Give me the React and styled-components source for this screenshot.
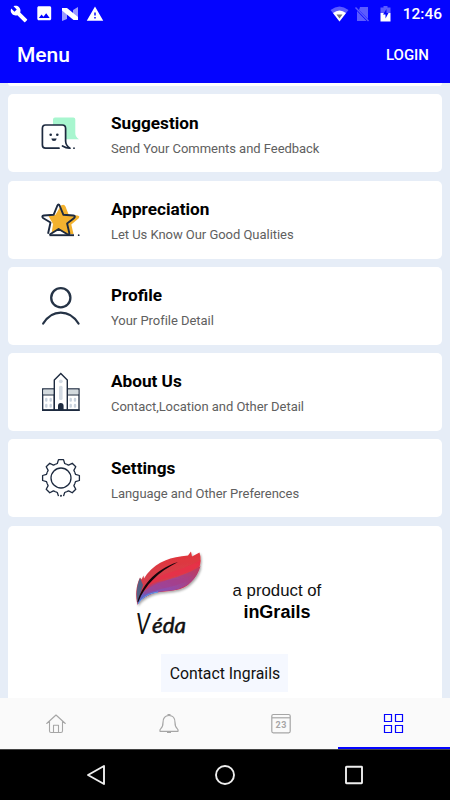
import React from "react"
import styled, { createGlobalStyle } from "styled-components"
import { MdBuild, MdImage, MdWarning } from "react-icons/md"

const GlobalStyle = createGlobalStyle`
  * {
    box-sizing: border-box;
  }
  body {
    margin: 0;
    font-family: Roboto, sans-serif;
  }
  h1, h2, p {
    margin: 0;
  }
  svg {
    display: block;
    flex-shrink: 0;
  }
  button {
    border: 0;
    padding: 0;
    background: none;
    font-family: inherit;
  }
`

const Screen = styled.div`
  width: 450px;
  height: 800px;
  display: flex;
  flex-direction: column;
  overflow: hidden;
  background: #e6edf7;
`

const Header = styled.header`
  height: 83px;
  flex-shrink: 0;
  background: #0404ff;
  color: #fff;
`

const StatusBar = styled.div`
  height: 27px;
  padding: 0 8px 0 10px;
  display: flex;
  justify-content: space-between;
  align-items: center;
`

const StatusGroup = styled.div`
  display: flex;
  align-items: center;
  gap: ${props => props.$gap}px;
`

const Clock = styled.span`
  font-size: 15.5px;
  font-weight: 500;
  line-height: 27px;
  padding-top: 1px;
  margin-left: 2px;
`

const TitleBar = styled.div`
  height: 56px;
  padding: 0 21px 0 17px;
  display: flex;
  justify-content: space-between;
  align-items: center;
`

const Title = styled.h1`
  font-size: 21px;
  font-weight: 500;
  line-height: 24px;
`

const LoginButton = styled.button`
  color: #fff;
  font-size: 15px;
  font-weight: 500;
`

const List = styled.main`
  flex: 1;
  min-height: 0;
  overflow: hidden;
  padding: 0 8.5px 0 8.3px;
  display: flex;
  flex-direction: column;
  gap: 8.25px;
`

const CardEnd = styled.div`
  height: 3.2px;
  flex-shrink: 0;
  background: #fff;
  border-radius: 0 0 5px 5px;
`

const Card = styled.div`
  height: 78px;
  flex-shrink: 0;
  padding-left: 32.7px;
  display: flex;
  align-items: center;
  gap: 30px;
  background: #fff;
  border-radius: 5px;
`

const CardLabel = styled.div`
  padding-top: 3.4px;
`

const CardTitle = styled.h2`
  font-size: 17.2px;
  font-weight: 700;
  line-height: 24px;
  color: #000;
`

const CardText = styled.p`
  margin-top: 3px;
  font-size: 13px;
  line-height: 22px;
  letter-spacing: -0.04px;
  color: #606060;
`

const BrandCard = styled.div`
  height: 190px;
  flex-shrink: 0;
  padding-top: 22px;
  display: flex;
  flex-direction: column;
  align-items: center;
  background: #fff;
  border-radius: 5px 5px 0 0;
`

const BrandRow = styled.div`
  height: 106px;
  display: flex;
  align-items: flex-start;
  gap: 25px;
  padding-left: 5px;
`

const BrandText = styled.div`
  padding-top: 32px;
  text-align: center;
  font-family: "Liberation Sans", sans-serif;
  font-size: 16.8px;
  line-height: 21px;
  color: #111;
`

const BrandName = styled.p`
  font-size: 18px;
  font-weight: 700;
  line-height: 22px;
  color: #000;
`

const ContactButton = styled.button`
  width: 127px;
  height: 38px;
  padding-top: 2px;
  background: #f5f8ff;
  color: #111;
  font-size: 15.8px;
`

const Tabs = styled.nav`
  height: 51px;
  flex-shrink: 0;
  display: grid;
  grid-template-columns: repeat(4, 1fr);
  background: #fafafa;
`

const Tab = styled.div`
  display: flex;
  justify-content: center;
  padding-top: 15px;
  color: ${props => (props.$active ? "#0404ff" : "#a6a6a6")};
  border-bottom: ${props => (props.$active ? "2px solid #0404ff" : "none")};
`

const SystemBar = styled.div`
  height: 51px;
  flex-shrink: 0;
  padding-bottom: 1px;
  display: flex;
  justify-content: center;
  align-items: center;
  gap: 108px;
  background: #000;
  border-top: 1px solid #444;
`

const navy = "#1d2a3f"

const NougatIcon = () => (
  <svg width="18" height="14" viewBox="-1 0 18 14">
    <path d="M0 1l5 3v8l-5 2zM16 0v13l-5-3V3z" fill="#fff" opacity=".6" />
    <path d="M0 1h5L16 10v3h-4.500L0 3.500z" fill="#fff" />
  </svg>
)

const WifiIcon = () => (
  <svg width="19" height="16" viewBox="0 0 19 16">
    <path d="M.5 4Q9.500-3 18.500 4L9.500 15.500z" fill="#fff" opacity=".35" />
    <path d="M3 7Q9.500 2 16 7L9.500 15.500z" fill="#fff" />
    <path d="M6.500 8.500h6L9.500 12.500z" fill="#777" />
  </svg>
)

const NoSimIcon = () => (
  <svg width="15" height="16" viewBox="0 0 15 16" opacity=".35">
    <path d="M5 1h8v12L4 4zM2 5l9.500 10H2z" fill="#fff" />
    <path d="M.5 1.500l13 13.500" stroke="#fff" strokeWidth="1.400" />
  </svg>
)

const BatteryIcon = () => (
  <svg width="11" height="17" viewBox="0 0 11 17">
    <path d="M3.500 1h4v1.500h3V8H.500V2.500h3z" fill="#fff" opacity=".35" />
    <path d="M.5 8h10v8.500H.500z" fill="#fff" />
    <path d="M6.500 4L3 9.500h2.500v4L8.500 8H6.500z" fill="#0404ff" />
  </svg>
)

const SuggestionIcon = () => (
  <svg width="40" height="40" viewBox="0 0 40 40">
    <path d="M14 4.500h18.300q2 0 2 2V20q0 4 3.700 6.300H12V6.500q0-2 2-2z" fill="#a8f6cf" />
    <path d="M18 35.200H4.500Q1.400 35.200 1.400 32V15.500Q1.400 12 4.500 12h16.800q3.300 0 3.300 3.500V28q0 4.500 4.400 7.200-3.500.300-7.500-2.200" fill="#fff" stroke={navy} strokeWidth="1.700" strokeLinecap="round" strokeLinejoin="round" />
    <circle cx="9.700" cy="21.800" r="1.300" fill={navy} />
    <circle cx="16.300" cy="21.800" r="1.300" fill={navy} />
    <path d="M10.300 25.500h5.400q-.4 2.500-2.700 2.500t-2.700-2.500z" fill={navy} />
    <circle cx="33" cy="35.200" r=".9" fill={navy} />
  </svg>
)

const StarIcon = () => (
  <svg width="40" height="40" viewBox="0 0 40 40">
    <path d="M20 5.500q3.200-2 4.500 1l3.200 8.300 8.800.8q3 .6 1 2.800l-7.200 6 2.200 9.600H10.500L12 24 7.500 16l7-1.200z" fill="#f3b22f" />
    <path d="M8.500 35l9-6 8 5.200v.8z" fill="#fff" />
    <path d="M7.200 33L9.500 22.500 2 18q-1.700-2 .8-2.500l9.900-.8L16.200 6q1.300-3 2.600 0l3.500 8.700 10.100.8q2.500.5.800 2.500l-7.100 5.500 2.200 9.500q.3 2-1.500 1.500l-9.200-5.500-8.500 5.200" fill="none" stroke={navy} strokeWidth="1.900" strokeLinecap="round" strokeLinejoin="round" />
    <path d="M8.500 35.200H33" stroke={navy} strokeWidth="1.900" />
    <circle cx="37.700" cy="35.200" r=".9" fill={navy} />
  </svg>
)

const ProfileIcon = () => (
  <svg width="40" height="40" viewBox="0 0 40 40" fill="none" stroke="#253346" strokeWidth="2.300" strokeLinecap="round">
    <circle cx="19.800" cy="11.700" r="9.600" />
    <path d="M2.200 37.500Q9 26.600 19.800 26.600T37.500 37.500" />
  </svg>
)

const AboutIcon = () => (
  <svg width="40" height="40" viewBox="0 0 40 40">
    <path d="M1.700 17h11.600v21H1.700zM26.300 17H38v21H26.300z" fill="#fff" stroke={navy} strokeWidth="1.300" />
    <path d="M2.300 17.600h11v4.900h-11zM26.300 17.600h11v4.900h-11z" fill="#d3dade" />
    <path d="M1.700 23h11.600M26.300 23H38" stroke={navy} strokeWidth="1.200" />
    <path d="M13.300 38V8l6.500-6.500L26.300 8v30z" fill="#fff" stroke={navy} strokeWidth="1.400" />
    <circle cx="19.800" cy="9.300" r="1.900" fill="#d3dbe4" />
    <rect x="18" y="13.700" width="3.600" height="14.300" rx="1.500" fill="#d3dbe4" />
    <path d="M17 38v-4q0-3 2.800-3t2.800 3v4z" fill={navy} />
    {[5.3, 9.7, 29.7, 34].map(x => (
      <path key={x} d={`M${x} 27v1.500M${x} 33v1.500`} stroke="#cad3de" strokeWidth="2.400" strokeLinecap="round" />
    ))}
    <path d="M1 38.200h37.700" stroke={navy} strokeWidth="1.500" />
  </svg>
)

const SettingsIcon = () => (
  <svg width="40" height="40" viewBox="-20 -20 40 40" fill="none" stroke={navy} strokeWidth="1.300" strokeLinejoin="round">
    <circle r="10" />
    {[0, 45, 90, 135, 225, 270, 315].map(angle => (
      <path key={angle} transform={`rotate(${angle})`} d="M-5.700-13.700L-3.700-14.500-2.500-18.400h5L3.700-14.500 5.700-13.700" />
    ))}
    <path d="M-5.700 13.700l2 .8 1.200 3.600M5.700 13.700l-2 .8-1.200 3.600" />
    <circle cy="17.700" r=".4" />
  </svg>
)

const VedaLogo = () => (
  <svg width="74" height="92" viewBox="0 0 74 92">
    <defs>
      <linearGradient id="feather" x1=".55" y1="0" x2=".65" y2="1">
        <stop offset="0" stopColor="#e23238" />
        <stop offset=".45" stopColor="#d83f4b" />
        <stop offset="1" stopColor="#c92b54" />
      </linearGradient>
      <linearGradient id="vane" x1="0" y1="1" x2="1" y2="0">
        <stop offset="0" stopColor="#526bce" />
        <stop offset=".45" stopColor="#934baa" />
        <stop offset="1" stopColor="#c23857" />
      </linearGradient>
      <filter id="shade" x="-10%" y="-10%" width="125%" height="125%">
        <feDropShadow dx="1" dy="1.500" stdDeviation="1.200" floodOpacity=".35" />
      </filter>
    </defs>
    <g filter="url(#shade)">
      <path d="M3.500 57C1.500 48 1.500 39 6 29.500l1.500 2 2-4 .5 3 3-4.500C24 13 37 9 54 7.500L57 3.500l1 5L65.500 4.500C69 15 64 28 54 37 44 45 28 42 18 46 11 49 6 52 3.500 57z" fill="url(#feather)" />
      <path d="M3.500 55C2 47 2.500 38 6 30l3 7z" fill="#526084" />
      <path d="M5 50C18 30 40 35 66.500 18 62 35 49 41 37 42.500 20 44 12 46 3.500 56z" fill="url(#vane)" />
      <path d="M9 41C24 23 43 26 66.500 12l-.5 5C45 33 25 25 8 44z" fill="#ed2947" opacity=".6" />
      <path d="M15 38c16-10 28-3 44-11-13 14-28 10-50 20z" fill="#a83e87" opacity=".6" />
    </g>
    <path d="M3.500 54C7 40 19 22 44 14 24 24 11 37 4.300 54z" fill="#16060c" />
    <path d="M4 56C9 48 16 45.500 24 44" fill="none" stroke="#58a4ed" strokeWidth="1" />
    <g fill="#111" fontFamily="Lato, sans-serif" fontStyle="italic">
      <text x="2" y="86" fontSize="28" textLength="14" lengthAdjust="spacingAndGlyphs">V</text>
      <text x="18" y="84.500" fontSize="22" textLength="34" lengthAdjust="spacingAndGlyphs" stroke="#111" strokeWidth=".5">éda</text>
    </g>
  </svg>
)

const HomeIcon = () => (
  <svg width="22" height="22" viewBox="0 0 22 22" fill="none" stroke="currentColor" strokeWidth="1.100" strokeLinecap="round" strokeLinejoin="round">
    <path d="M1.700 10.500L11 2l9.300 8.500M4.500 8.500v9.500q0 1.500 1.500 1.500h10q1.500 0 1.500-1.500V8.500M8.500 19.300V12.300h5v7" />
  </svg>
)

const BellIcon = () => (
  <svg width="22" height="22" viewBox="0 0 22 22" fill="none" stroke="currentColor" strokeWidth="1.200" strokeLinejoin="round">
    <path d="M2 18.400q-.4-1.700.6-2.500 2.400-2 2.400-6.400Q5 2.500 11 2.500t6 7q0 4.400 2.400 6.400 1 .8.600 2.500z" />
    <path d="M9.500 1.800h3M9 19.300h4" strokeWidth="1.500" />
  </svg>
)

const CalendarIcon = () => (
  <svg width="22" height="22" viewBox="0 0 22 22">
    <rect x="1.800" y="1.500" width="18.400" height="18.300" rx="1.500" fill="none" stroke="currentColor" strokeWidth="1.200" />
    <path d="M2 4.800h18" stroke="currentColor" strokeWidth="1.200" />
    <text x="11.200" y="15.400" textAnchor="middle" fontFamily="Roboto, sans-serif" fontSize="9" fontWeight="700" letterSpacing=".6" fill="currentColor">23</text>
  </svg>
)

const GridIcon = () => (
  <svg width="22" height="22" viewBox="0 0 22 22" fill="none" stroke="currentColor" strokeWidth="1.200">
    <path d="M1.500 1.500h7v7h-7zM12.500 1.500h7v7h-7zM1.500 12.500h7v7h-7zM12.500 12.500h7v7h-7z" />
  </svg>
)

const items = [
  { title: "Suggestion", text: "Send Your Comments and Feedback", Icon: SuggestionIcon },
  { title: "Appreciation", text: "Let Us Know Our Good Qualities", Icon: StarIcon },
  { title: "Profile", text: "Your Profile Detail", Icon: ProfileIcon },
  { title: "About Us", text: "Contact,Location and Other Detail", Icon: AboutIcon },
  { title: "Settings", text: "Language and Other Preferences", Icon: SettingsIcon },
]

const App = () => (
  <Screen>
    <GlobalStyle />
    <Header>
      <StatusBar>
        <StatusGroup $gap={7}>
          <MdBuild size={18} />
          <MdImage size={18.5} />
          <NougatIcon />
          <MdWarning size={18} />
        </StatusGroup>
        <StatusGroup $gap={10}>
          <StatusGroup $gap={6}>
            <WifiIcon />
            <NoSimIcon />
          </StatusGroup>
          <BatteryIcon />
          <Clock>12:46</Clock>
        </StatusGroup>
      </StatusBar>
      <TitleBar>
        <Title>Menu</Title>
        <LoginButton>LOGIN</LoginButton>
      </TitleBar>
    </Header>
    <List>
      <CardEnd />
      {items.map(({ title, text, Icon }) => (
        <Card key={title}>
          <Icon />
          <CardLabel>
            <CardTitle>{title}</CardTitle>
            <CardText>{text}</CardText>
          </CardLabel>
        </Card>
      ))}
      <BrandCard>
        <BrandRow>
          <VedaLogo />
          <BrandText>
            <p>a product of</p>
            <BrandName>inGrails</BrandName>
          </BrandText>
        </BrandRow>
        <ContactButton>Contact Ingrails</ContactButton>
      </BrandCard>
    </List>
    <Tabs>
      <Tab><HomeIcon /></Tab>
      <Tab><BellIcon /></Tab>
      <Tab><CalendarIcon /></Tab>
      <Tab $active><GridIcon /></Tab>
    </Tabs>
    <SystemBar>
      <svg width="20" height="22" viewBox="0 0 20 22" fill="none" stroke="#eee" strokeWidth="1.900" strokeLinejoin="round">
        <path d="M18 2v18L2 11z" />
      </svg>
      <svg width="22" height="22" viewBox="0 0 22 22" fill="none" stroke="#eee" strokeWidth="1.900">
        <circle cx="11" cy="11" r="9" />
      </svg>
      <svg width="20" height="22" viewBox="0 0 20 22" fill="none" stroke="#eee" strokeWidth="1.900">
        <rect x="2" y="2.800" width="16" height="16.400" rx=".5" />
      </svg>
    </SystemBar>
  </Screen>
)

export default App
